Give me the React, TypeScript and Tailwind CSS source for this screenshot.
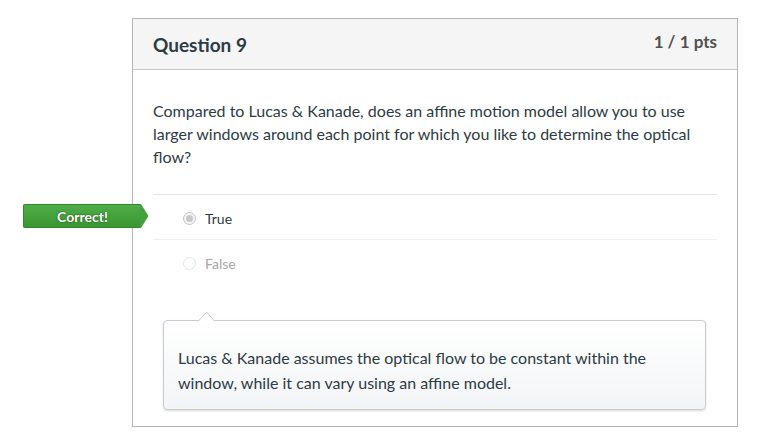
import React from 'react';

const font = { fontFamily: 'Lato, "Open Sans", sans-serif' };

const Radio: React.FC<{ checked?: boolean; faded?: boolean }> = ({ checked, faded }) => (
  <span
    className={`w-[13px] h-[13px] rounded-full border flex items-center justify-center ${
      faded ? 'border-[#e3e3e3] bg-white' : 'border-[#c4c4c4] bg-[#f4f4f4]'
    }`}
  >
    {checked && <span className="w-[7px] h-[7px] rounded-full bg-[#c9c9c9]" />}
  </span>
);

const App: React.FC = () => {
  return (
    <div className="w-[776px] h-[442px] bg-white overflow-hidden" style={font}>
      <div className="relative ml-[132px] mt-[18px] w-[606px] border border-[#b5b5b5] bg-white">
        <header className="h-[51px] bg-[#f5f5f5] border-b border-[#c7c7c7] px-5 flex items-start justify-between">
          <h2 className="text-[19px] font-bold text-[#2d3b45] mt-[12px]">Question 9</h2>
          <span className="text-[17px] font-bold text-[#505050] mt-[10px]">1 / 1 pts</span>
        </header>

        <main className="px-5 pt-[29px] pb-[16px]">
          <p className="text-[16px] leading-[23px] text-[#2d3b45]">
            Compared to Lucas &amp; Kanade, does an affine motion model allow you to use larger windows around each point for which you like to determine the optical flow?
          </p>

          <div className="mt-[26px] border-t border-[#e6e6e6]">
            <div className="h-[45px] pt-[3px] border-b border-[#eeeeee] flex items-center pl-[30px] gap-[9px]">
              <Radio checked />
              <span className="text-[14px] text-[#2d3b45]">True</span>
            </div>
            <div className="h-[45px] pt-[2px] flex items-center pl-[30px] gap-[9px]">
              <Radio faded />
              <span className="text-[14px] text-[#a7a7a7]">False</span>
            </div>
          </div>

          <div className="relative mt-[35px] ml-[10px] mr-[11px] rounded-[4px] border border-[#c7cdd1] bg-gradient-to-b from-white to-[#f2f4f6] shadow-[0_1px_2px_rgba(0,0,0,0.15)] px-[14px] pt-[24px] pb-[14px]">
            <svg className="absolute left-[34px] -top-[10px]" width="17" height="11" viewBox="0 0 17 11">
              <path d="M0 10.5 L8.5 1 L17 10.5" fill="#ffffff" stroke="#c7cdd1" strokeWidth="1" />
            </svg>
            <p className="text-[16px] leading-[25px] text-[#2d3b45]">
              Lucas &amp; Kanade assumes the optical flow to be constant within the window, while it can vary using an affine model.
            </p>
          </div>
        </main>

        <div className="absolute left-[-110px] top-[185px] flex items-center">
          <div className="w-[118px] h-[24px] rounded-l-[2px] bg-gradient-to-b from-[#4fae48] to-[#3a9632] border border-[#34872d] border-r-0 flex items-center justify-center">
            <span className="text-[14px] font-bold text-white [text-shadow:0_0_2px_rgba(0,0,0,0.6)]">Correct!</span>
          </div>
          <svg width="9" height="24" viewBox="0 0 9 24" className="-ml-px">
            <path d="M0 0 L1 0 L8.5 12 L1 24 L0 24 Z" fill="#43a23c" />
          </svg>
        </div>
      </div>
    </div>
  );
};

export default App;
